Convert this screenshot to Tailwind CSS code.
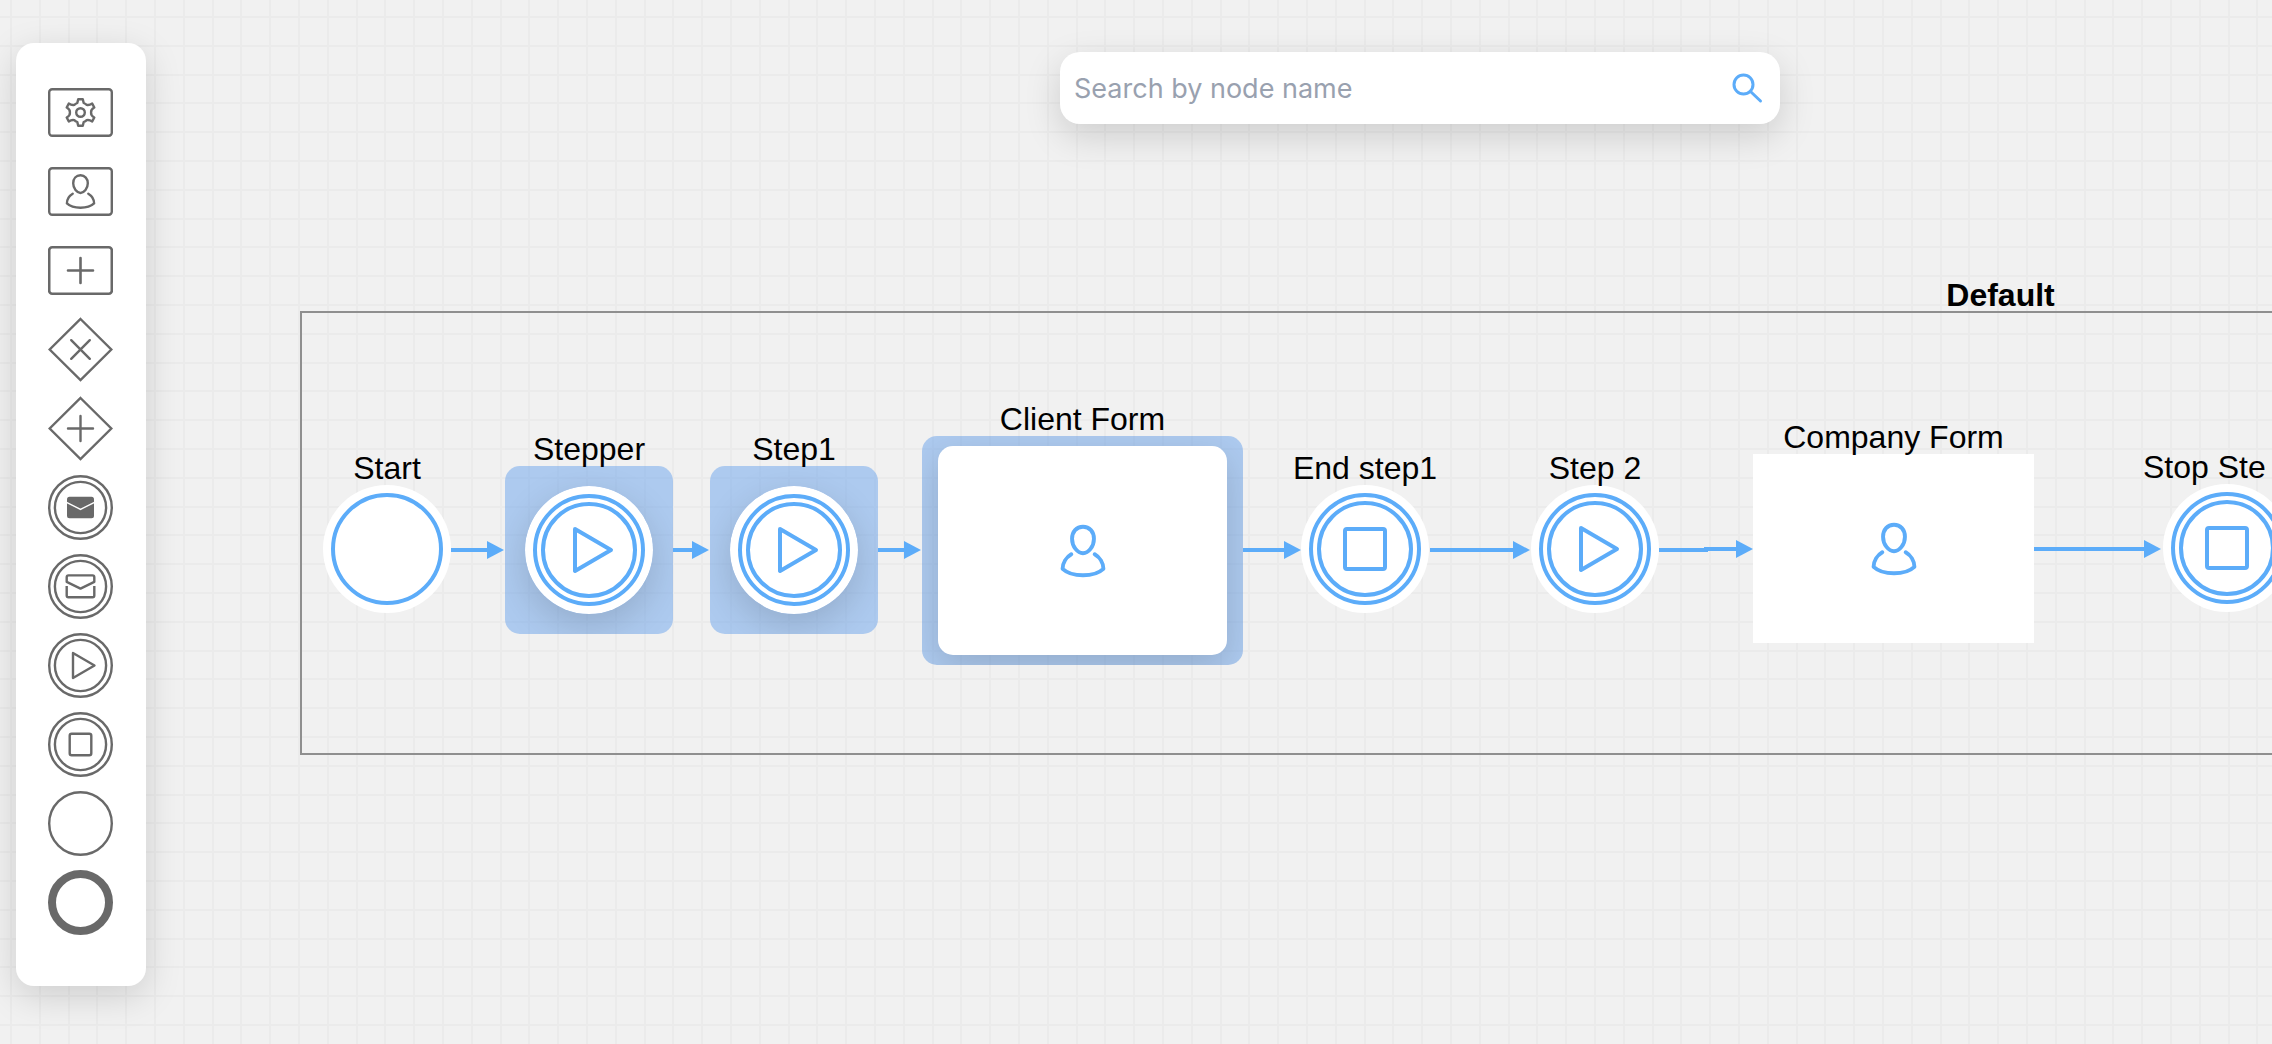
<!DOCTYPE html>
<html lang="en">
<head>
<meta charset="utf-8">
<meta name="viewport" content="width=device-width, initial-scale=1">
<title>Process designer</title>
<script src="https://cdn.jsdelivr.net/npm/@tailwindcss/browser@4"></script>
</head>
<body class="bg-[#f1f1f1]">

<!-- Shared icon shapes, all centred on 0,0 -->
<svg class="hidden" aria-hidden="true">
  <symbol id="gear" viewBox="-20 -20 40 40" overflow="visible">
    <path d="M-2.3-13.3H2.3L3.2-9.5Q5-8.8 6.2-7.6Q8.8-7 11.7-8.9L13.8-5Q10.2-3.2 10.6 0Q10.2 3.2 13.8 5L11.7 8.9Q8.8 7 6.2 7.6Q5 8.8 3.2 9.5L2.3 13.3H-2.3L-3.2 9.5Q-5 8.8-6.2 7.6Q-8.8 7-11.7 8.9L-13.8 5Q-10.2 3.2-10.6 0Q-10.2-3.2-13.8-5L-11.7-8.9Q-8.8-7-6.2-7.6Q-5-8.8-3.2-9.5Z"/>
    <circle r="4.3"/>
  </symbol>
  <symbol id="person" viewBox="-20 -20 40 40" overflow="visible">
    <path d="M0-16.2C4.4-16.2 7.3-12.8 7.3-8.2C7.3-3 3.6 1.5 0 1.5C-3.6 1.5-7.3-3-7.3-8.2C-7.3-12.8-4.4-16.2 0-16.2Z"/>
    <path d="M-7.8 2.2C-11.2 4.2-13.6 8-13.6 11.9C-10.5 14.8-5.5 16.2 0 16.2C5.5 16.2 10.5 14.8 13.6 11.9C13.6 8 11.2 4.2 7.8 2.2"/>
  </symbol>
</svg>

<div class="relative min-h-screen overflow-hidden font-['Liberation_Sans',Arial,sans-serif]">

  <!-- Canvas -->
  <main class="absolute inset-0 overflow-hidden" aria-label="Process canvas">
    <svg class="absolute inset-0 size-full" aria-hidden="true">
      <defs>
        <pattern id="grid" x="10" y="16" width="144" height="144" patternUnits="userSpaceOnUse">
          <path d="M1 0V144M30 0V144M59 0V144M87 0V144M116 0V144M0 1H144M0 30H144M0 59H144M0 87H144M0 116H144" fill="none" stroke="#000" stroke-opacity=".022" stroke-width="2"/>
        </pattern>
      </defs>
      <rect width="100%" height="100%" fill="url(#grid)"/>
    </svg>

    <!-- Pool -->
    <section class="absolute left-[300px] top-[311px] flex h-[444px] w-[3401px] justify-center border-2 border-[#8f8f8f]">
      <h1 class="-mt-9 h-9 text-[32px] leading-9 font-bold text-black">Default</h1>
    </section>

    <!-- Edges -->
    <svg class="absolute inset-0 size-full" fill="none" stroke="#5cacf9" stroke-width="4" aria-hidden="true">
      <defs>
        <marker id="head" markerUnits="userSpaceOnUse" markerWidth="18" markerHeight="18" refX="0" refY="9" orient="auto">
          <path d="M0 0L17 9L0 18Z" fill="#5cacf9" stroke="none"/>
        </marker>
      </defs>
      <g marker-end="url(#head)">
        <path d="M451 550H487"/>
        <path d="M673 550H692"/>
        <path d="M878 550H904"/>
        <path d="M1243 550H1284"/>
        <path d="M1430 550H1513"/>
        <path d="M1659 550H1706V549H1736"/>
        <path d="M2034 549H2144"/>
      </g>
    </svg>

    <!-- Start -->
    <div class="absolute left-[323px] top-[485px] size-32">
      <svg class="block size-32" viewBox="-64 -64 128 128" fill="none" stroke="#5cacf9" stroke-width="4" aria-hidden="true">
        <circle r="64" fill="#fff" stroke="none"/><circle r="54"/>
      </svg>
      <div class="absolute inset-x-0 bottom-full flex justify-center text-[32px] leading-[34px] whitespace-nowrap">Start</div>
    </div>

    <!-- Stepper -->
    <div class="absolute left-[505px] top-[466px] size-[168px]">
      <div class="flex size-full items-center justify-center overflow-hidden rounded-[15px] bg-[#75aaed]/55">
        <svg class="block size-32 rounded-full shadow-[0_12px_36px_rgba(0,0,0,0.15)]" viewBox="-64 -64 128 128" fill="none" stroke="#5cacf9" stroke-width="4" stroke-linejoin="round" aria-hidden="true">
          <circle r="64" fill="#fff" stroke="none"/><circle r="54"/><circle r="46"/><path d="M-14-21L22 0L-14 21Z"/>
        </svg>
      </div>
      <div class="absolute inset-x-0 bottom-full flex justify-center text-[32px] leading-[34px] whitespace-nowrap">Stepper</div>
    </div>

    <!-- Step1 -->
    <div class="absolute left-[710px] top-[466px] size-[168px]">
      <div class="flex size-full items-center justify-center overflow-hidden rounded-[15px] bg-[#75aaed]/55">
        <svg class="block size-32 rounded-full shadow-[0_12px_36px_rgba(0,0,0,0.15)]" viewBox="-64 -64 128 128" fill="none" stroke="#5cacf9" stroke-width="4" stroke-linejoin="round" aria-hidden="true">
          <circle r="64" fill="#fff" stroke="none"/><circle r="54"/><circle r="46"/><path d="M-14-21L22 0L-14 21Z"/>
        </svg>
      </div>
      <div class="absolute inset-x-0 bottom-full flex justify-center text-[32px] leading-[34px] whitespace-nowrap">Step1</div>
    </div>

    <!-- Client Form -->
    <div class="absolute left-[922px] top-[436px] h-[229px] w-[321px]">
      <div class="size-full overflow-hidden rounded-[15px] bg-[#75aaed]/55 px-4 py-[10px]">
        <div class="flex size-full items-center justify-center rounded-[15px] bg-white shadow-[0_12px_36px_rgba(0,0,0,0.15)]">
          <svg class="block size-[60px]" fill="none" stroke="#5cacf9" stroke-width="2.6" stroke-linecap="round" stroke-linejoin="round" aria-hidden="true"><use href="#person"/></svg>
        </div>
      </div>
      <div class="absolute inset-x-0 bottom-full flex justify-center text-[32px] leading-[34px] whitespace-nowrap">Client Form</div>
    </div>

    <!-- End step1 -->
    <div class="absolute left-[1301px] top-[485px] size-32">
      <svg class="block size-32" viewBox="-64 -64 128 128" fill="none" stroke="#5cacf9" stroke-width="4" aria-hidden="true">
        <circle r="64" fill="#fff" stroke="none"/><circle r="54"/><circle r="46"/><rect x="-20" y="-20" width="40" height="40" rx="2"/>
      </svg>
      <div class="absolute inset-x-0 bottom-full flex justify-center text-[32px] leading-[34px] whitespace-nowrap">End step1</div>
    </div>

    <!-- Step 2 -->
    <div class="absolute left-[1531px] top-[485px] size-32">
      <svg class="block size-32" viewBox="-64 -64 128 128" fill="none" stroke="#5cacf9" stroke-width="4" stroke-linejoin="round" aria-hidden="true">
        <circle r="64" fill="#fff" stroke="none"/><circle r="54"/><circle r="46"/><path d="M-14-21L22 0L-14 21Z"/>
      </svg>
      <div class="absolute inset-x-0 bottom-full flex justify-center text-[32px] leading-[34px] whitespace-nowrap">Step 2</div>
    </div>

    <!-- Company Form -->
    <div class="absolute left-[1753px] top-[454px] h-[189px] w-[281px]">
      <div class="flex size-full items-center justify-center bg-white">
        <svg class="block size-[60px]" fill="none" stroke="#5cacf9" stroke-width="2.6" stroke-linecap="round" stroke-linejoin="round" aria-hidden="true"><use href="#person"/></svg>
      </div>
      <div class="absolute inset-x-0 bottom-full flex justify-center text-[32px] leading-[34px] whitespace-nowrap">Company Form</div>
    </div>

    <!-- Stop step, runs past the right edge -->
    <div class="absolute left-[2163px] top-[484px] size-32">
      <svg class="block size-32" viewBox="-64 -64 128 128" fill="none" stroke="#5cacf9" stroke-width="4" aria-hidden="true">
        <circle r="64" fill="#fff" stroke="none"/><circle r="54"/><circle r="46"/><rect x="-20" y="-20" width="40" height="40" rx="2"/>
      </svg>
      <div class="absolute -left-5 bottom-full text-[32px] leading-[34px] whitespace-nowrap">Stop Ste</div>
    </div>
  </main>

  <!-- Tools laid over the canvas -->
  <div class="relative flex items-start pl-4">
    <nav class="mt-[43px] flex w-[130px] shrink-0 flex-col gap-[14px] rounded-[18px] bg-white pt-[37px] pb-[51px] pl-8 shadow-[0_10px_36px_rgba(0,0,0,0.15)]" aria-label="Node palette">
      <button type="button" aria-label="Service task" class="size-[65px]">
        <svg class="block size-full" viewBox="0 0 65 65" fill="none" stroke="#696969" stroke-width="2.4" stroke-linejoin="round"><rect x="1.2" y="9.2" width="62.6" height="46.6" rx="3"/><use href="#gear" x="12.5" y="12.5" width="40" height="40"/></svg>
      </button>
      <button type="button" aria-label="User task" class="size-[65px]">
        <svg class="block size-full" viewBox="0 0 65 65" fill="none" stroke="#696969" stroke-width="2.4" stroke-linecap="round" stroke-linejoin="round"><rect x="1.2" y="9.2" width="62.6" height="46.6" rx="3"/><use href="#person" x="12.5" y="12.5" width="40" height="40"/></svg>
      </button>
      <button type="button" aria-label="Sub process" class="size-[65px]">
        <svg class="block size-full" viewBox="0 0 65 65" fill="none" stroke="#696969" stroke-width="2.6" stroke-linecap="round"><rect x="1.2" y="9.2" width="62.6" height="46.6" rx="3"/><path d="M20 32.5H45M32.5 20V45"/></svg>
      </button>
      <button type="button" aria-label="Exclusive gateway" class="size-[65px]">
        <svg class="block size-full" viewBox="0 0 65 65" fill="none" stroke="#696969" stroke-width="2.4" stroke-linecap="round"><path d="M32.5 2L63.3 32.5L32.5 63L1.7 32.5Z"/><path d="M23.2 23.2L41.8 41.8M41.8 23.2L23.2 41.8"/></svg>
      </button>
      <button type="button" aria-label="Parallel gateway" class="size-[65px]">
        <svg class="block size-full" viewBox="0 0 65 65" fill="none" stroke="#696969" stroke-width="2.4" stroke-linecap="round"><path d="M32.5 2L63.3 32.5L32.5 63L1.7 32.5Z"/><path d="M20 32.5H45M32.5 20V45"/></svg>
      </button>
      <button type="button" aria-label="Send message" class="size-[65px]">
        <svg class="block size-full" viewBox="0 0 65 65" fill="none" stroke="#696969" stroke-width="2.4"><circle cx="32.5" cy="32.5" r="31.3"/><circle cx="32.5" cy="32.5" r="25.6"/><rect x="19" y="21.7" width="27" height="21.6" rx="2.5" fill="#696969" stroke="none"/><path d="M18.5 27.3L32.5 34.3L46.5 27.3" stroke="#fff" stroke-width="1.5"/></svg>
      </button>
      <button type="button" aria-label="Receive message" class="size-[65px]">
        <svg class="block size-full" viewBox="0 0 65 65" fill="none" stroke="#696969" stroke-width="2.4" stroke-linejoin="round"><circle cx="32.5" cy="32.5" r="31.3"/><circle cx="32.5" cy="32.5" r="25.6"/><path d="M18.7 27.8V23.2Q18.7 21.4 20.5 21.4H44.5Q46.3 21.4 46.3 23.2V27.8L32.5 34.6Z"/><path d="M18.7 32V41.5Q18.7 43.3 20.5 43.3H44.5Q46.3 43.3 46.3 41.5V32"/></svg>
      </button>
      <button type="button" aria-label="Step start" class="size-[65px]">
        <svg class="block size-full" viewBox="0 0 65 65" fill="none" stroke="#696969" stroke-width="2.4" stroke-linejoin="round"><circle cx="32.5" cy="32.5" r="31.3"/><circle cx="32.5" cy="32.5" r="25.6"/><path d="M25 20L46.5 32.5L25 45Z"/></svg>
      </button>
      <button type="button" aria-label="Step end" class="size-[65px]">
        <svg class="block size-full" viewBox="0 0 65 65" fill="none" stroke="#696969" stroke-width="2.4"><circle cx="32.5" cy="32.5" r="31.3"/><circle cx="32.5" cy="32.5" r="25.6"/><rect x="21.7" y="21.7" width="21.6" height="21.6" rx="2"/></svg>
      </button>
      <button type="button" aria-label="Start event" class="size-[65px]">
        <svg class="block size-full" viewBox="0 0 65 65" fill="none" stroke="#696969" stroke-width="2.4"><circle cx="32.5" cy="32.5" r="31.3"/></svg>
      </button>
      <button type="button" aria-label="End event" class="size-[65px]">
        <svg class="block size-full" viewBox="0 0 65 65" fill="none" stroke="#696969" stroke-width="8"><circle cx="32.5" cy="32.5" r="28.5"/></svg>
      </button>
    </nav>

    <div class="mt-[52px] flex flex-1 justify-center pl-[422px]">
      <form role="search" class="flex h-[72px] w-[720px] items-center rounded-[20px] bg-white px-[14px] shadow-[0_12px_36px_rgba(0,0,0,0.15)]">
        <input type="text" aria-label="Search by node name" placeholder="Search by node name" class="h-full min-w-0 flex-1 bg-transparent font-[Inter,sans-serif] text-[27px] text-gray-800 outline-none placeholder:text-gray-400">
        <button type="button" aria-label="Search" class="size-9">
          <svg class="block size-full" viewBox="0 0 36 36" fill="none" stroke="#5cacf9" stroke-width="3" stroke-linecap="round"><circle cx="13.5" cy="14.5" r="9.5"/><path d="M20.5 21.5L30.5 31"/></svg>
        </button>
      </form>
    </div>
  </div>
</div>
</body>
</html>
